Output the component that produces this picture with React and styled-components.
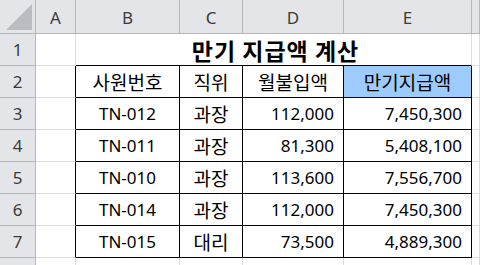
import React from 'react';
import styled, { createGlobalStyle } from 'styled-components';

const Global = createGlobalStyle`
  html, body { margin: 0; padding: 0; background: #ffffff; overflow: hidden; }
`;

const GRID = '#dadcdf';
const HEAD_LINE = '#b4b7bb';
const BLACK = '#000000';

const Sheet = styled.div`
  display: grid;
  grid-template-columns: 36px 40px 104px 63px 101px 128px 1fr;
  grid-template-rows: 34px repeat(8, 32px);
  width: 480px;
  height: 265px;
  overflow: hidden;
  font-family: "Noto Sans", "Noto Sans CJK KR", sans-serif;
  color: #000;
`;

const Corner = styled.div`
  box-sizing: border-box;
  background: #e3e5e8;
  border-right: 1px solid ${HEAD_LINE};
  border-bottom: 1px solid ${HEAD_LINE};
  display: flex;
  align-items: flex-end;
  justify-content: flex-end;
  padding: 0 3px 3px 0;
`;

const ColHead = styled.div`
  box-sizing: border-box;
  background: #e3e5e8;
  border-right: 1px solid ${HEAD_LINE};
  border-bottom: 1px solid ${HEAD_LINE};
  display: flex;
  align-items: center;
  justify-content: center;
  padding-top: 2px;
  font-size: 17px;
  color: #3c3c3c;
`;

const RowHead = styled.div`
  box-sizing: border-box;
  background: #e3e5e8;
  border-right: 1px solid ${HEAD_LINE};
  border-bottom: 1px solid ${HEAD_LINE};
  display: flex;
  align-items: center;
  justify-content: center;
  font-size: 17px;
  color: #3c3c3c;
`;

const Cell = styled.div`
  box-sizing: border-box;
  border-right: 1px solid ${(p) => p.$r || GRID};
  border-bottom: 1px solid ${(p) => p.$b || GRID};
  background: ${(p) => p.$bg || '#ffffff'};
  display: flex;
  align-items: center;
  justify-content: ${(p) => (p.$align === 'right' ? 'flex-end' : 'center')};
  padding-right: ${(p) => (p.$align === 'right' ? '9px' : '0')};
  font-size: 17px;
  white-space: nowrap;
  overflow: hidden;
`;

const Title = styled(Cell)`
  grid-column: span 4;
  padding-left: 4px;
`;

const TitleText = styled.span`
  font-family: "Noto Sans CJK KR", sans-serif;
  font-size: 23px;
  font-weight: 700;
  letter-spacing: 1px;
`;

const Hangul = styled.span`
  font-family: "Noto Sans CJK KR", sans-serif;
  font-size: 19px;
`;

const rows = [
  ['TN-012', '과장', '112,000', '7,450,300'],
  ['TN-011', '과장', '81,300', '5,408,100'],
  ['TN-010', '과장', '113,600', '7,556,700'],
  ['TN-014', '과장', '112,000', '7,450,300'],
  ['TN-015', '대리', '73,500', '4,889,300'],
];

const header = ['사원번호', '직위', '월불입액', '만기지급액'];

export default function App() {
  const cols = ['A', 'B', 'C', 'D', 'E', ''];
  return (
    <>
      <Global />
      <Sheet>
        <Corner>
          <svg width="26" height="26" viewBox="0 0 26 26">
            <polygon points="26,0 26,26 0,26" fill="#b9bcc0" />
          </svg>
        </Corner>
        {cols.map((c, i) => (
          <ColHead key={'h' + i}>{c}</ColHead>
        ))}

        <RowHead>1</RowHead>
        <Cell />
        <Title $b={BLACK}>
          <TitleText>만기 지급액 계산</TitleText>
        </Title>
        <Cell />

        <RowHead>2</RowHead>
        <Cell $r={BLACK} />
        {header.map((h, i) => (
          <Cell key={'t' + i} $r={BLACK} $b={BLACK} $bg={i === 3 ? '#9ccbfc' : undefined}>
            <Hangul>{h}</Hangul>
          </Cell>
        ))}
        <Cell />

        {rows.map((r, ri) => (
          <React.Fragment key={ri}>
            <RowHead>{ri + 3}</RowHead>
            <Cell $r={BLACK} />
            <Cell $r={BLACK} $b={BLACK}>{r[0]}</Cell>
            <Cell $r={BLACK} $b={BLACK}><Hangul>{r[1]}</Hangul></Cell>
            <Cell $r={BLACK} $b={BLACK} $align="right">{r[2]}</Cell>
            <Cell $r={BLACK} $b={BLACK} $align="right">{r[3]}</Cell>
            <Cell />
          </React.Fragment>
        ))}

        <RowHead />
        <Cell />
        <Cell />
        <Cell />
        <Cell />
        <Cell />
        <Cell />
      </Sheet>
    </>
  );
}
